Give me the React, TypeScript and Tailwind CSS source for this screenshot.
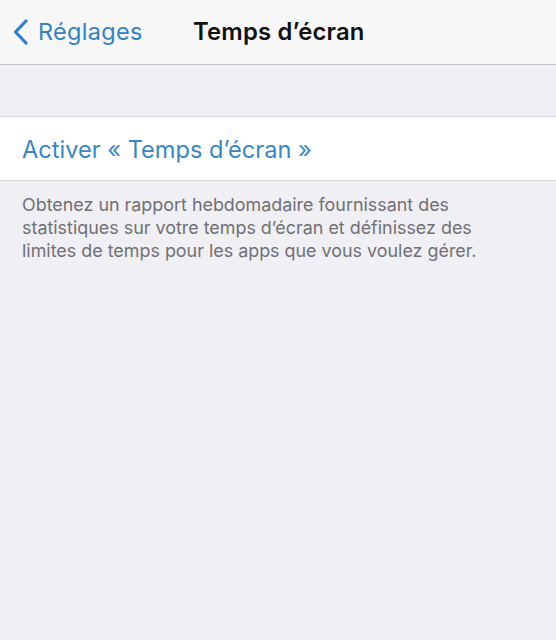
import React from "react";

export default function App() {
  return (
    <div
      className="w-[556px] h-[640px] bg-[#efeff4] flex flex-col overflow-hidden"
      style={{ fontFamily: "Inter, 'Liberation Sans', sans-serif" }}
    >
      <div className="h-[65px] bg-[#f7f7f8] border-b border-[#c4c4c8] flex items-center relative shrink-0">
        <div className="flex items-center pl-[13px] gap-[10px] text-[#3481c0] text-[23.5px] tracking-[0.3px]">
          <svg width="15" height="26" viewBox="0 0 15 26" fill="none" className="mb-[1px]">
            <path d="M13 2 L2.5 13 L13 24" stroke="#2f7fd0" strokeWidth="3.2" strokeLinecap="round" strokeLinejoin="round" />
          </svg>
          <span>Réglages</span>
        </div>
        <div className="absolute left-[193px] top-0 h-full flex items-center text-[23.8px] font-semibold text-[#111] tracking-[0.2px]">
          Temps d’écran
        </div>
      </div>
      <div className="h-[51px] shrink-0" />
      <div className="h-[65px] bg-white border-y border-[#d6d6da] flex items-center pl-[22px] pt-[2px] text-[23.6px] text-[#3a86bf] shrink-0">
        Activer « Temps d’écran »
      </div>
      <div className="pl-[22px] pt-[12px]">
        <p className="w-[470px] text-[17.9px] leading-[23px] text-[#707075]">
          Obtenez un rapport hebdomadaire fournissant des statistiques sur votre temps d’écran et définissez des limites de temps pour les apps que vous voulez gérer.
        </p>
      </div>
    </div>
  );
}
